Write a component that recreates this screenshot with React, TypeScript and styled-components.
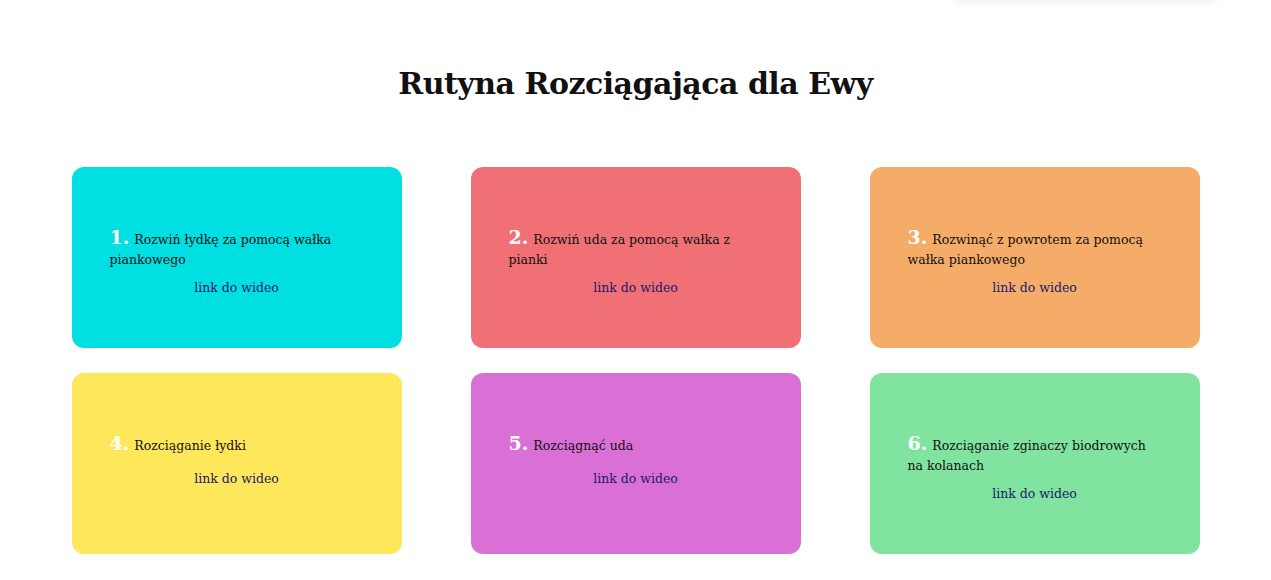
import React from "react";
import styled, { createGlobalStyle } from "styled-components";

const Global = createGlobalStyle`
  html, body { margin: 0; padding: 0; background: #ffffff; }
  body { font-family: "DejaVu Serif", "Liberation Serif", serif; overflow: hidden; }
`;

const Page = styled.div`
  position: relative;
  width: 1271px;
  height: 580px;
  overflow: hidden;
`;

const MenuShadow = styled.div`
  position: absolute;
  top: -60px;
  left: 952px;
  width: 266px;
  height: 60px;
  background: #fff;
  border-radius: 8px;
  box-shadow: 0 2px 8px rgba(0, 0, 0, 0.07);
`;

const Title = styled.h1`
  margin: 0;
  padding-top: 63px;
  text-align: center;
  font-family: "DejaVu Serif", serif;
  font-weight: bold;
  font-size: 30px;
  line-height: 42px;
  color: #111;
  letter-spacing: -0.5px;
`;

const Grid = styled.div`
  display: grid;
  grid-template-columns: repeat(3, 330px);
  column-gap: 69px;
  row-gap: 25px;
  justify-content: center;
  margin-top: 62px;
`;

const Card = styled.div<{ $bg: string }>`
  background: ${(p) => p.$bg};
  border-radius: 12px;
  height: 181px;
  box-sizing: border-box;
  padding: 61px 38px 0 38px;
`;

const Step = styled.p`
  margin: 0;
  min-height: 27px;
  font-size: 12.5px;
  line-height: 20px;
  color: #111;
`;

const Num = styled.span`
  font-family: "DejaVu Serif", serif;
  font-weight: bold;
  font-size: 19px;
  line-height: 1;
  color: #fff;
  margin-right: 5px;
`;

const Link = styled.a`
  display: block;
  margin-top: 8px;
  text-align: center;
  font-size: 12.5px;
  line-height: 20px;
  color: #1b1b6b;
  text-decoration: none;
`;

const steps = [
  { n: "1.", t: "Rozwiń łydkę za pomocą wałka piankowego", bg: "#00e0e3" },
  { n: "2.", t: "Rozwiń uda za pomocą wałka z pianki", bg: "#f07076" },
  { n: "3.", t: "Rozwinąć z powrotem za pomocą wałka piankowego", bg: "#f6ac69" },
  { n: "4.", t: "Rozciąganie łydki", bg: "#ffe75c" },
  { n: "5.", t: "Rozciągnąć uda", bg: "#da70d6" },
  { n: "6.", t: "Rozciąganie zginaczy biodrowych na kolanach", bg: "#80e3a0" },
];

export default function App() {
  return (
    <Page>
      <Global />
      <MenuShadow />
      <Title>Rutyna Rozciągająca dla Ewy</Title>
      <Grid>
        {steps.map((s) => (
          <Card key={s.n} $bg={s.bg}>
            <Step>
              <Num>{s.n}</Num>
              {s.t}
            </Step>
            <Link href="#">link do wideo</Link>
          </Card>
        ))}
      </Grid>
    </Page>
  );
}
